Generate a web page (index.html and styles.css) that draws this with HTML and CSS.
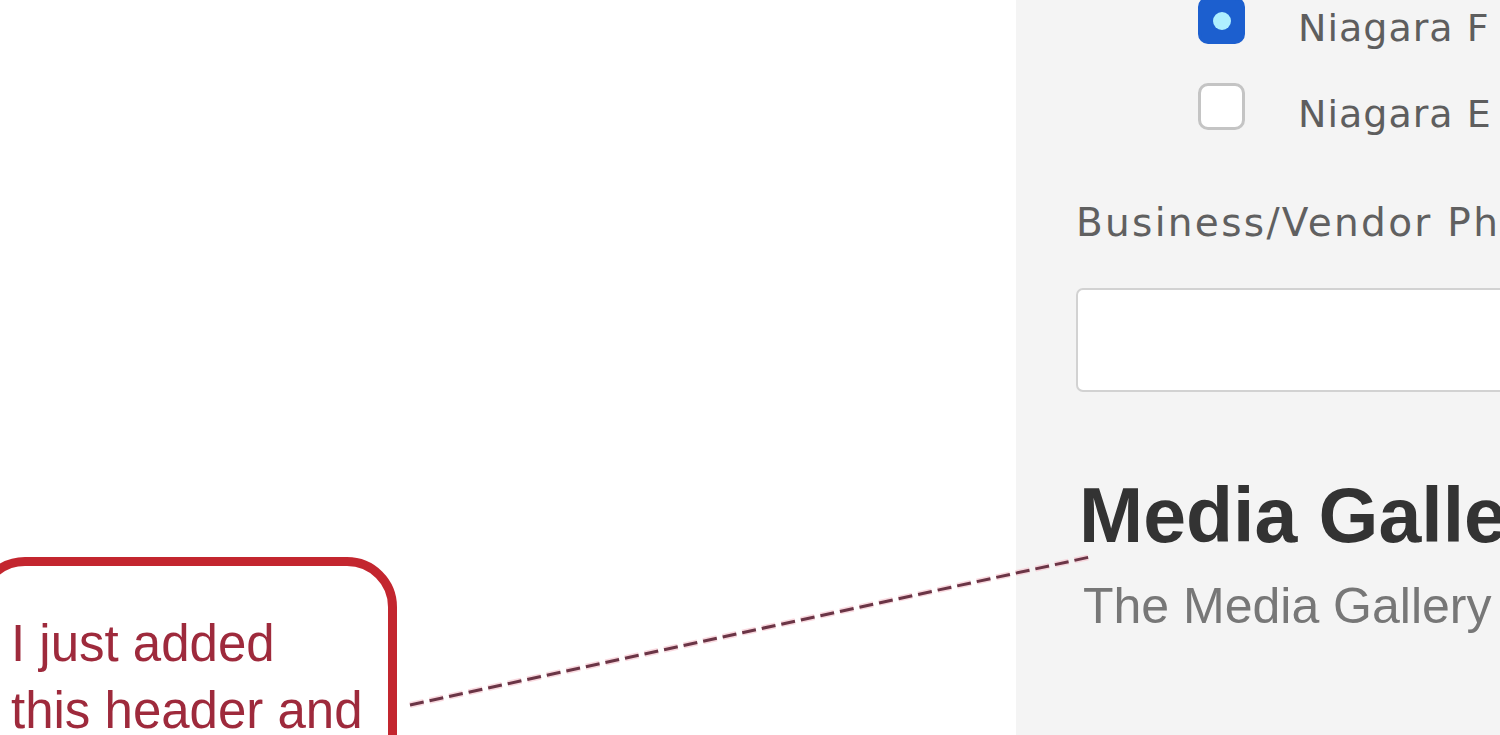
FILE: index.html
```html
<!DOCTYPE html>
<html lang="en">
<head>
<meta charset="utf-8">
<title>Media Gallery annotation</title>
<link rel="stylesheet" href="styles.css">
</head>
<body>
<div class="page">
  <div class="blank"></div>
  <div class="panel">
    <div class="choice">
      <span class="box box-checked"><span class="dot"></span></span>
      <span class="choice-label">Niagara F</span>
    </div>
    <div class="choice">
      <span class="box"></span>
      <span class="choice-label">Niagara E</span>
    </div>
    <div class="field-label">Business/Vendor Ph</div>
    <div class="input"></div>
    <h2 class="gallery-title">Media Galle</h2>
    <p class="gallery-sub">The Media Gallery</p>
  </div>
</div>

<div class="note">
  <p class="note-text">I just added<br>this header and</p>
</div>

<svg class="leader" width="1500" height="735" viewBox="0 0 1500 735" aria-hidden="true">
  <line x1="410" y1="705" x2="1090" y2="557" stroke="#f7c9d2" stroke-width="6" stroke-dasharray="14 6" opacity="0.7"/>
  <line x1="410" y1="705" x2="1090" y2="557" stroke="#6b3546" stroke-width="3" stroke-dasharray="14 6"/>
</svg>
</body>
</html>
```

FILE: styles.css
```css
html, body {
  margin: 0;
  padding: 0;
  width: 1500px;
  height: 735px;
  overflow: hidden;
  background: #ffffff;
}

.page {
  display: flex;
  width: 1500px;
  height: 735px;
  overflow: hidden;
}

.blank {
  width: 1016px;
  flex: none;
  background: #ffffff;
}

.panel {
  flex: 1;
  min-width: 0;
  background: #f4f4f4;
  padding-left: 60px;
  overflow: hidden;
  display: flex;
  flex-direction: column;
  align-items: flex-start;
}

.choice {
  display: flex;
  align-items: flex-start;
  gap: 53px;
  margin-left: 122px;
  white-space: nowrap;
}

.choice:first-child {
  margin-top: -3px;
}

.choice + .choice {
  margin-top: 36px;
}

.box {
  width: 47px;
  height: 47px;
  box-sizing: border-box;
  border-radius: 10px;
  border: 3px solid #c4c4c4;
  background: #ffffff;
  flex: none;
  display: flex;
  align-items: center;
  justify-content: center;
}

.box-checked {
  background: #1c5fcf;
  border-color: #1c5fcf;
}

.dot {
  width: 18px;
  height: 18px;
  border-radius: 50%;
  background: #aeefff;
}

.choice-label {
  font-family: "DejaVu Sans", sans-serif;
  font-size: 38px;
  line-height: 1;
  letter-spacing: 1px;
  color: #5e5e5e;
  margin-top: 12px;
}

.field-label {
  font-family: "DejaVu Sans", sans-serif;
  font-size: 39px;
  line-height: 1;
  letter-spacing: 2.3px;
  color: #606060;
  margin-top: 70px;
  white-space: nowrap;
}

.input {
  width: 600px;
  height: 104px;
  box-sizing: border-box;
  border: 2px solid #d2d2d2;
  border-radius: 7px;
  background: #ffffff;
  margin-top: 46px;
  flex: none;
}

.gallery-title {
  font-family: "Liberation Sans", Arial, sans-serif;
  font-weight: bold;
  font-size: 77px;
  line-height: 1;
  color: #333333;
  margin: 85px 0 0 3px;
  white-space: nowrap;
}

.gallery-sub {
  font-family: "Liberation Sans", Arial, sans-serif;
  font-size: 50px;
  line-height: 1;
  color: #777777;
  margin: 27px 0 0 7px;
  white-space: nowrap;
}

.note {
  position: absolute;
  left: -25px;
  top: 557px;
  width: 422px;
  height: 260px;
  box-sizing: border-box;
  border: 9px solid #c3262f;
  border-radius: 50px;
  background: #ffffff;
  padding: 44px 0 0 27px;
}

.note-text {
  margin: 0;
  font-family: "Liberation Sans", Arial, sans-serif;
  font-size: 51px;
  line-height: 67px;
  color: #9e2a3c;
  white-space: nowrap;
}

.leader {
  position: absolute;
  left: 0;
  top: 0;
  pointer-events: none;
}
```
